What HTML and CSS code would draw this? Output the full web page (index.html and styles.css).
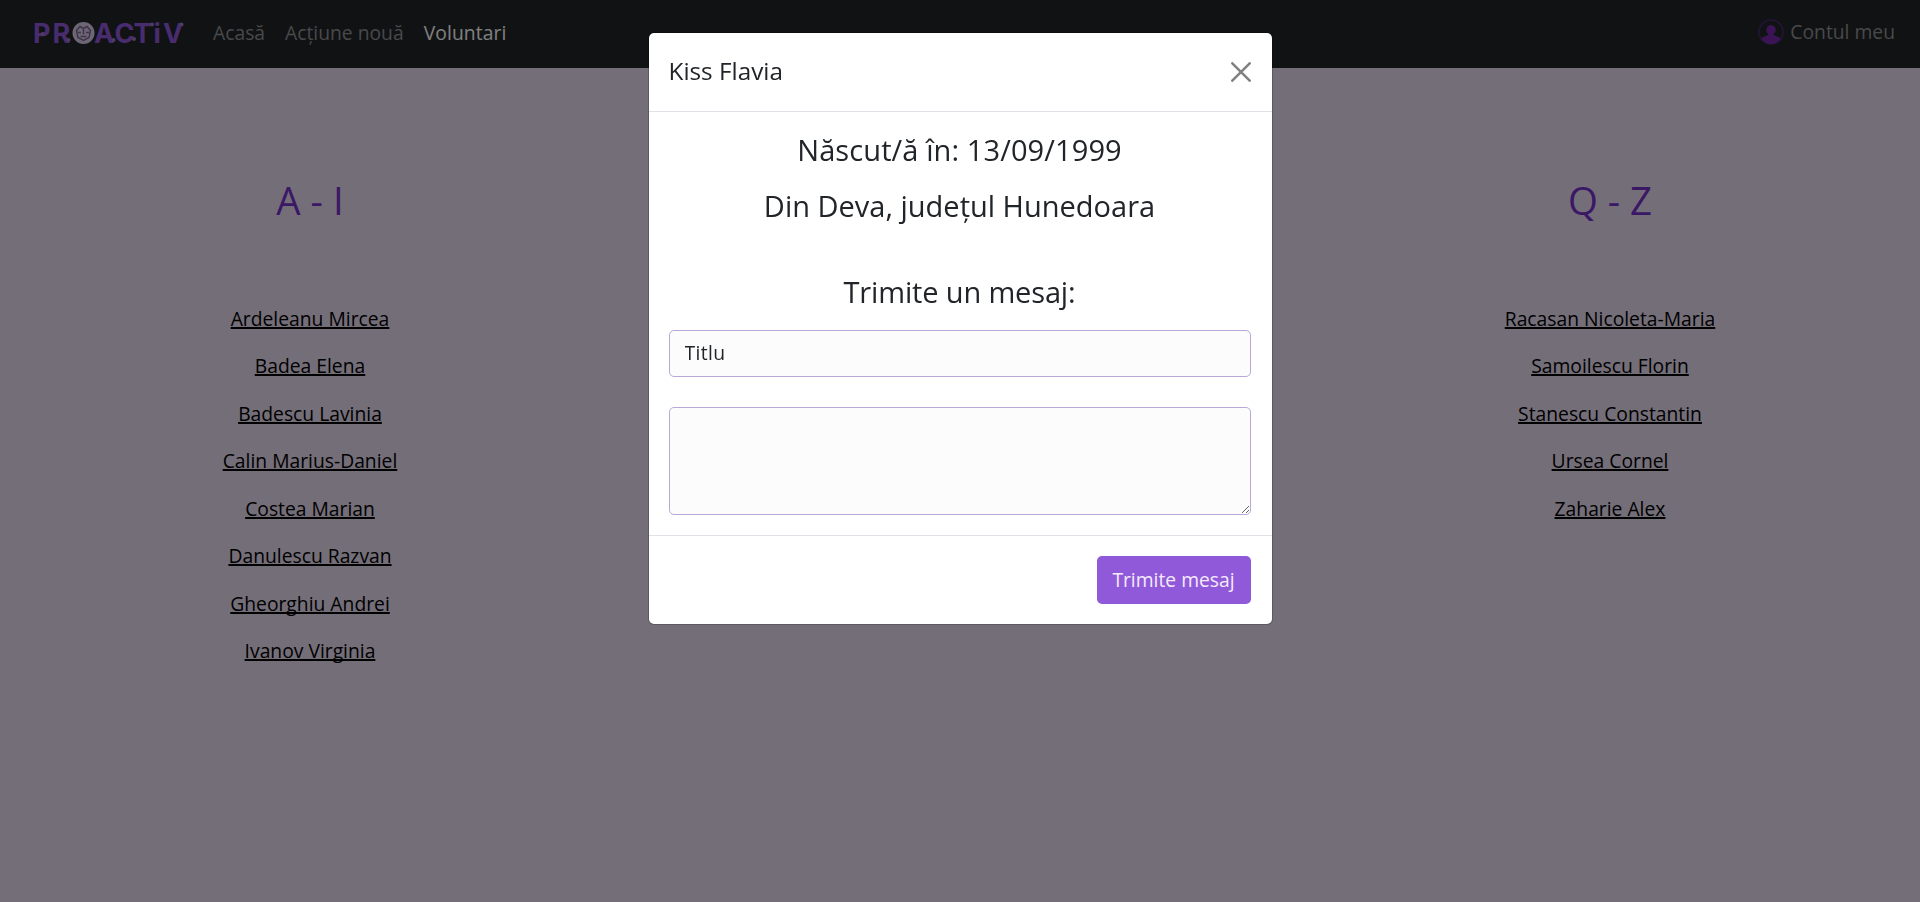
FILE: index.html
```
<!DOCTYPE html>
<html lang="ro">
<head>
<meta charset="utf-8">
<title>Voluntari - Proactiv</title>
<link rel="stylesheet" href="styles.css">
</head>
<body>
<header class="navbar">
  <a class="brand" href="#">
    <svg class="logo" width="152" height="24" viewBox="0 0 152 24">
      <g class="logo-text"><text y="21.5" x="-1 18.5 60 80.5 99.5 119.5 129">PRACTiV</text></g>
      <circle class="logo-ball" cx="49.500" cy="12" r="11"/>
      <g class="logo-face">
        <path d="M42.500 9.500l3.500-4 3.500 2 3.500-2 3.500 4-1.500 7-5.500 3-5.500-3z"/>
        <path d="M44 11.500h3M52 11.500h3M46.500 15.500h6M49.500 7.500v6"/>
      </g>
      <g class="logo-dots">
        <circle cx="8.500" cy="13" r="2"/><circle cx="34.500" cy="19" r="2"/>
        <circle cx="79.500" cy="19" r="2"/><circle cx="100" cy="18" r="2"/>
        <circle cx="118" cy="3.500" r="2"/><circle cx="147.500" cy="3.500" r="2"/>
      </g>
    </svg>
  </a>
  <nav class="nav">
    <a class="nav-link" href="#">Acasă</a>
    <a class="nav-link" href="#">Acțiune nouă</a>
    <a class="nav-link active" href="#">Voluntari</a>
  </nav>
  <a class="account" href="#">
    <svg width="26" height="26" viewBox="0 0 26 26">
      <circle class="account-ring" cx="13" cy="13" r="12"/>
      <path class="account-person" d="M13 6a4.700 4.700 0 0 1 4.700 4.800c0 2-.9 3.600-2.200 4.500.2 1.700 4.800 1.700 7.200 4.200A12 12 0 0 1 13 25.300 12 12 0 0 1 3.300 19.500c2.400-2.500 7-2.500 7.200-4.200-1.300-.9-2.200-2.500-2.200-4.500A4.700 4.700 0 0 1 13 6z"/>
    </svg>
    <span>Contul meu</span>
  </a>
</header>

<main class="columns">
  <section class="column">
    <h1>A - I</h1>
    <ul class="names">
      <li><a href="#">Ardeleanu Mircea</a></li>
      <li><a href="#">Badea Elena</a></li>
      <li><a href="#">Badescu Lavinia</a></li>
      <li><a href="#">Calin Marius-Daniel</a></li>
      <li><a href="#">Costea Marian</a></li>
      <li><a href="#">Danulescu Razvan</a></li>
      <li><a href="#">Gheorghiu Andrei</a></li>
      <li><a href="#">Ivanov Virginia</a></li>
    </ul>
  </section>
  <section class="column"></section>
  <section class="column">
    <h1>Q - Z</h1>
    <ul class="names">
      <li><a href="#">Racasan Nicoleta-Maria</a></li>
      <li><a href="#">Samoilescu Florin</a></li>
      <li><a href="#">Stanescu Constantin</a></li>
      <li><a href="#">Ursea Cornel</a></li>
      <li><a href="#">Zaharie Alex</a></li>
    </ul>
  </section>
</main>

<div class="backdrop">
  <div class="modal" role="dialog">
    <div class="modal-header">
      <h5>Kiss Flavia</h5>
      <svg class="close" width="20" height="20" viewBox="0 0 20 20"><path d="M1.300 1.300l17.400 17.400M18.700 1.300L1.300 18.700"/></svg>
    </div>
    <div class="modal-body">
      <h3>Născut/ă în: 13/09/1999</h3>
      <h3 class="place">Din Deva, județul Hunedoara</h3>
      <h3 class="prompt">Trimite un mesaj:</h3>
      <input class="field" type="text" value="Titlu">
      <textarea class="field message"></textarea>
    </div>
    <div class="modal-footer">
      <button class="send">Trimite mesaj</button>
    </div>
  </div>
</div>
</body>
</html>
```
FILE: styles.css
```
* { box-sizing: border-box; }

body {
  margin: 0;
  height: 902px;
  overflow: hidden;
  background: #e8dcf2;
  color: #212529;
  font: 19.3px/30px "Open Sans", "Noto Sans", sans-serif;
}

h1, h3, h5, ul { margin: 0; padding: 0; font-weight: 400; }
a { text-decoration: none; }

.navbar {
  display: flex;
  align-items: center;
  height: 68px;
  padding: 0 25px 0 34px;
  background: #212529;
}
.brand { display: flex; margin-bottom: 2px; }
.logo { overflow: visible; }
.logo-text { font: 700 27px Inter, sans-serif; fill: #9058dc; }
.logo-ball { fill: #dccdec; }
.logo-face { fill: none; stroke: #7d6c90; stroke-width: 1.5; }
.logo-dots { fill: #9a7ac0; }

.nav { display: flex; gap: 20px; margin: 0 auto 3px 27px; }
.nav-link { color: #909294; }
.nav-link.active { color: #fff; letter-spacing: .1px; }

.account { display: flex; align-items: center; gap: 6px; margin-bottom: 4px; color: #909294; }
.account-ring { fill: none; stroke: #4c2870; stroke-width: 1.5; }
.account-person { fill: #7428a8; }

.columns {
  display: grid;
  grid-template-columns: repeat(3, 650px);
  margin: 0 -15px;
  padding-top: 108px;
  text-align: center;
}
h1 { font-size: 38.4px; line-height: 48px; color: #7630cc; }
.names {
  display: grid;
  gap: 17.5px;
  margin-top: 79.8px;
  list-style: none;
}
.names a {
  color: #000;
  text-decoration: underline 2px;
  text-underline-offset: 1px;
  text-decoration-skip-ink: none;
}

.backdrop {
  position: fixed;
  inset: 0;
  display: flex;
  justify-content: center;
  align-items: flex-start;
  padding-top: 32px;
  background: rgba(0, 0, 0, .5);
}
.modal {
  width: 625px;
  border: 1px solid rgba(0, 0, 0, .2);
  border-radius: 6px;
  background: #fff;
  background-clip: padding-box;
}
.modal-header {
  display: flex;
  justify-content: space-between;
  align-items: center;
  padding: 20px 21px 20px 20px;
  border-bottom: 1px solid #dee2e6;
}
h5 { margin-bottom: 1.5px; font-size: 24.3px; line-height: 36px; }
.close { fill: none; stroke: #808080; stroke-width: 2.5; stroke-linecap: round; }

.modal-body { display: flex; flex-direction: column; padding: 20px 21px 20px 20px; text-align: center; }
h3 { font-size: 29px; line-height: 36px; }
h3:first-child { letter-spacing: .1px; }
.place { margin-top: 20px; }
.prompt { margin-top: 50px; letter-spacing: -.15px; }
.field {
  width: 100%;
  height: 47.5px;
  margin: 20px 0 0;
  padding: 6px 15px 8px;
  border: 1px solid #b9a8d6;
  border-radius: 5px;
  background: #fcfcfc;
  color: #212529;
  font: inherit;
  letter-spacing: .4px;
}
.message { height: 108px; margin-top: 30px; resize: vertical; }

.modal-footer {
  display: flex;
  justify-content: flex-end;
  padding: 20px 21px 20px 20px;
  border-top: 1px solid #dee2e6;
}
.send {
  width: 154px;
  height: 47.5px;
  padding: 0;
  border: 0;
  border-radius: 5px;
  background: #9059d9;
  color: #f4eafc;
  font: inherit;
}
```
